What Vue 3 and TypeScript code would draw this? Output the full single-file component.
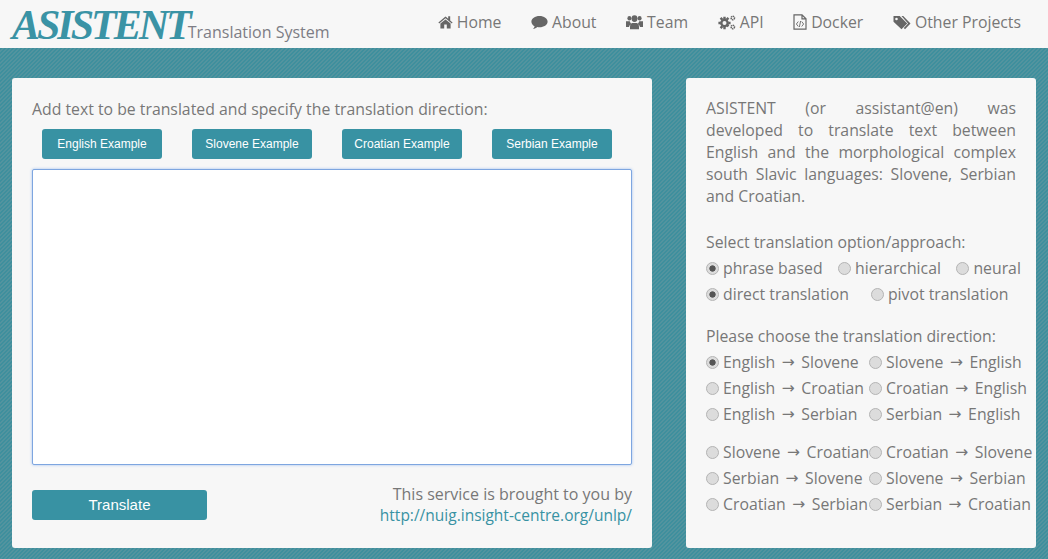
<script setup lang="ts">
import { ref } from 'vue'

const examples = ['English', 'Slovene', 'Croatian', 'Serbian']
const method = ref('phrase')
const route = ref('direct')
const direction = ref('en-sl')
const text = ref('')

const methods = [
  { id: 'phrase', label: 'phrase based' },
  { id: 'hier', label: 'hierarchical' },
  { id: 'neural', label: 'neural' }
]
const routes = [
  { id: 'direct', label: 'direct translation' },
  { id: 'pivot', label: 'pivot translation' }
]
// each row: left pair, right pair
const groupA = [
  [['en-sl', 'English', 'Slovene'], ['sl-en', 'Slovene', 'English']],
  [['en-hr', 'English', 'Croatian'], ['hr-en', 'Croatian', 'English']],
  [['en-sr', 'English', 'Serbian'], ['sr-en', 'Serbian', 'English']]
]
const groupB = [
  [['sl-hr', 'Slovene', 'Croatian'], ['hr-sl', 'Croatian', 'Slovene']],
  [['sr-sl', 'Serbian', 'Slovene'], ['sl-sr', 'Slovene', 'Serbian']],
  [['hr-sr', 'Croatian', 'Serbian'], ['sr-hr', 'Serbian', 'Croatian']]
]
</script>

<template>
  <div class="page">
    <header class="topbar">
      <div class="brand">
        <span class="logo">ASISTENT</span>
        <span class="subtitle">Translation System</span>
      </div>
      <nav class="nav">
        <a class="nav-item">
          <svg class="ico" width="15" height="14" viewBox="0 0 15 14"><path d="M7.500 1.600 0.400 7.500l.8 1L7.500 3.300l6.300 5.200.8-1-2.400-2V1.200h-2v2.600z M2.400 8.600V13.400h3.800V9.600h2.600v3.800h3.800V8.600L7.500 4.400z" /></svg>Home
        </a>
        <a class="nav-item">
          <svg class="ico" width="17" height="15" viewBox="0 0 17 15"><path d="M8.500 1C4 1 .4 3.500.4 6.700c0 1.900 1.300 3.500 3.200 4.500-.2 1-.8 2-1.600 2.800 1.700-.2 3.200-1 4.300-2 .7.1 1.400.2 2.200.2 4.500 0 8.100-2.500 8.100-5.500S13 1 8.500 1z" /></svg>About
        </a>
        <a class="nav-item">
          <svg class="ico" width="17" height="17" viewBox="0 0 17 15" preserveAspectRatio="none"><circle cx="3.400" cy="3.700" r="2" /><circle cx="13.600" cy="3.700" r="2" /><circle cx="8.500" cy="4" r="3" /><path d="M0 6.500h3.800c.3 1 .8 1.700 1.500 2.300-1.300.5-2 1.500-2.200 2.700H0zM17 6.500h-3.800c-.3 1-.8 1.700-1.500 2.300 1.300.5 2 1.500 2.200 2.700H17zM6.300 8h4.400c1.500.5 2.300 1.700 2.300 3.300v2.200H4v-2.200C4 9.700 4.800 8.500 6.300 8z" /></svg>Team
        </a>
        <a class="nav-item">
          <svg class="ico" width="18" height="15" viewBox="0 0 18 15"><circle cx="6.500" cy="8" r="3.200" fill="none" stroke="#666" stroke-width="2.400" /><path d="M5.300 1.800h2.400v2.400H5.300zM5.300 11.800h2.400v2.400H5.300zM.4 6.800h2.400v2.400H.4zM10.200 6.800h2.400v2.400h-2.400zM1.700 3.800l1.700-1.700 1.700 1.700-1.700 1.700zM7.900 10.500l1.700-1.700 1.700 1.700-1.700 1.700zM1.700 12.200l1.700 1.700 1.700-1.700-1.700-1.700zM7.900 3.800l1.700 1.700 1.700-1.700-1.700-1.700z" /><circle cx="14.800" cy="3" r="1.700" fill="none" stroke="#666" stroke-width="1.500" stroke-dasharray="1.300 .5" /><circle cx="14.800" cy="12" r="1.700" fill="none" stroke="#666" stroke-width="1.500" stroke-dasharray="1.300 .5" /></svg>API
        </a>
        <a class="nav-item">
          <svg class="ico" width="14" height="16" viewBox="0 0 14 16"><path d="M1 .8h8l4 4v10.400H1z M9 .8v4h4" fill="none" stroke="#666" stroke-width="1.200" /><path d="M5.300 7.500 3.400 10l1.900 2.500M8.700 7.500l1.900 2.500-1.900 2.500M7.600 7l-1.200 6" fill="none" stroke="#666" stroke-width=".9" /></svg>Docker
        </a>
        <a class="nav-item">
          <svg class="ico" width="18" height="15" viewBox="0 0 18 15"><path fill-rule="evenodd" d="M.5 1h6.200l7.500 7.500-5.700 5.700L.5 6.700zM3.500 2.700a1.300 1.300 0 1 0 0 2.600 1.300 1.300 0 0 0 0-2.600z" /><path d="M8.500 1h1.700l7.300 7.500-5.500 5.700-1.200-1.200 4.200-4.500z" /></svg>Other Projects
        </a>
      </nav>
    </header>

    <main class="content">
      <section class="card left">
        <p class="intro">Add text to be translated and specify the translation direction:</p>
        <div class="examples">
          <button v-for="e in examples" :key="e" class="btn example">{{ e }} Example</button>
        </div>
        <textarea v-model="text" class="source"></textarea>
        <div class="actions">
          <button class="btn translate">Translate</button>
          <div class="credit">
            This service is brought to you by<br />
            <a class="link">http://nuig.insight-centre.org/unlp/</a>
          </div>
        </div>
      </section>

      <aside class="card right">
        <p class="about">ASISTENT (or assistant@en) was developed to translate text between English and the morphological complex south Slavic languages: Slovene, Serbian and Croatian.</p>

        <p class="heading first">Select translation option/approach:</p>
        <div class="row spread">
          <label v-for="m in methods" :key="m.id" class="opt">
            <input v-model="method" type="radio" :value="m.id" />{{ m.label }}
          </label>
        </div>
        <div class="row routes">
          <label v-for="r in routes" :key="r.id" class="opt">
            <input v-model="route" type="radio" :value="r.id" />{{ r.label }}
          </label>
        </div>

        <p class="heading second">Please choose the translation direction:</p>
        <div v-for="row in groupA" :key="row[0][0]" class="row dir">
          <label v-for="d in row" :key="d[0]" class="opt">
            <input v-model="direction" type="radio" :value="d[0]" />{{ d[1] }}<span class="arrow">→</span>{{ d[2] }}
          </label>
        </div>
        <div class="gap"></div>
        <div v-for="row in groupB" :key="row[0][0]" class="row dir">
          <label v-for="d in row" :key="d[0]" class="opt">
            <input v-model="direction" type="radio" :value="d[0]" />{{ d[1] }}<span class="arrow">→</span>{{ d[2] }}
          </label>
        </div>
      </aside>
    </main>
  </div>
</template>

<style>
html, body {
  margin: 0;
  height: 100%;
  overflow: hidden;
}
</style>

<style scoped>
.page {
  width: 1048px;
  height: 559px;
  overflow: hidden;
  font-family: "Open Sans", "Noto Sans", sans-serif;
  font-size: 15.8px;
  color: #777;
  background-color: #46919f;
  background-image: repeating-linear-gradient(135deg, #3e8f9d 0, #3e8f9d 1.41px, #52949f 1.41px, #52949f 2.83px);
}
.topbar {
  height: 48px;
  background: #f7f7f7;
  display: flex;
  justify-content: space-between;
}
.brand {
  display: flex;
  align-items: flex-end;
  padding: 0 0 0 12px;
}
.logo {
  font-family: "Liberation Serif", serif;
  font-style: italic;
  font-weight: 700;
  font-size: 42px;
  line-height: 46px;
  letter-spacing: -3px;
  margin-right: -1px;
  color: #3a93a5;
  white-space: nowrap;
}
.subtitle {
  font-size: 16px;
  line-height: 22px;
  margin-bottom: 5px;
  color: #7d7d85;
}
.nav {
  display: flex;
  align-items: center;
  gap: 29.6px;
  padding: 0 27px 4px 0;
}
.nav-item {
  display: flex;
  align-items: center;
  gap: 4px;
  font-size: 15.8px;
  color: #777;
  white-space: nowrap;
}
.ico {
  fill: #666;
  flex: none;
}
.content {
  display: flex;
  gap: 34px;
  padding: 30px 12px 0;
}
.card {
  background: #f7f7f7;
  border-radius: 3px;
  height: 470px;
  box-sizing: border-box;
}
.left {
  width: 640px;
  padding: 20px 20px 0;
}
.right {
  width: 350px;
  padding: 19px 0 0 20px;
  line-height: 22px;
}
p {
  margin: 0;
}
.intro {
  line-height: 22px;
}
.examples {
  display: flex;
  gap: 30px;
  padding: 9px 10px 0;
}
.btn {
  border: 0;
  border-radius: 3px;
  background: #3892a3;
  color: #fff;
  font-family: "Liberation Sans", Arial, sans-serif;
  padding: 0;
}
.example {
  width: 120px;
  height: 30px;
  font-size: 12px;
}
.source {
  display: block;
  box-sizing: border-box;
  width: 600px;
  height: 296px;
  margin-top: 10px;
  border: 1px solid #7ea6e0;
  border-radius: 2px;
  box-shadow: 0 0 3px #9ebfef;
  background: #fff;
  outline: none;
  resize: none;
}
.actions {
  display: flex;
  justify-content: space-between;
  align-items: flex-start;
  margin-top: 20px;
}
.translate {
  width: 175px;
  height: 30px;
  margin-top: 5px;
  padding-bottom: 2px;
  font-size: 15px;
}
.credit {
  text-align: right;
  line-height: 21px;
  font-size: 16px;
  margin-top: -1px;
}
.link {
  color: #3892a3;
  font-size: 15.5px;
}
.about {
  width: 310px;
  text-align: justify;
}
.first {
  margin-top: 24px;
}
.second {
  margin-top: 18px;
}
.heading {
  margin-bottom: 2px;
}
.row {
  display: flex;
  height: 26px;
  align-items: center;
  white-space: nowrap;
}
.spread {
  gap: 15.5px;
}
.routes {
  gap: 22px;
}
.opt {
  display: flex;
  align-items: center;
}
.opt input {
  appearance: none;
  box-sizing: border-box;
  width: 13px;
  height: 13px;
  margin: 0 4px 0 0;
  flex: none;
  border: 1px solid #b4b4b4;
  border-radius: 50%;
  background: #dcdcdc;
}
.opt input:checked {
  background: radial-gradient(circle, #555 0, #555 2.8px, #dcdcdc 3.5px);
}
.arrow {
  font-family: "DejaVu Sans", sans-serif;
  font-size: 15.5px;
  font-weight: 400;
  padding: 0 6.5px;
}
.dir .opt {
  width: 163px;
}
.gap {
  height: 12px;
}
</style>
